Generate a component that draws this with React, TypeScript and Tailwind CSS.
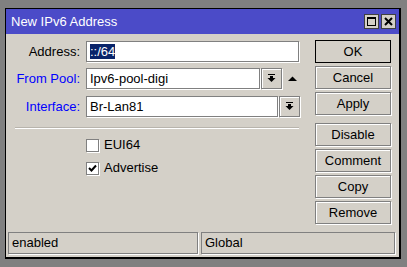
import React from "react";

const font = { fontFamily: '"Liberation Sans", Arial, sans-serif' };

function DropIcon() {
  return (
    <svg width="9" height="9" viewBox="0 0 9 9">
      <rect x="1" y="0" width="7" height="1" fill="#000" />
      <rect x="3" y="2" width="3" height="2" fill="#000" />
      <polygon points="0.5,4 8.5,4 4.5,8" fill="#000" />
    </svg>
  );
}

function Field({ w, children }: { w: string; children?: React.ReactNode }) {
  return (
    <div
      className={`${w} h-[21px] bg-white border border-[#808080] shadow-[1px_1px_0_#fff] flex items-center px-[3px] text-[13px] text-black`}
    >
      {children}
    </div>
  );
}

function DropBtn() {
  return (
    <div className="w-[21px] h-[21px] bg-[#d4d0c8] border border-[#808080] shadow-[inset_1px_1px_0_#fff,1px_1px_0_#fff] flex items-center justify-center">
      <DropIcon />
    </div>
  );
}

function Btn({ label, def }: { label: string; def?: boolean }) {
  return (
    <div
      className={`w-[76px] h-[23px] flex items-center justify-center text-[13px] text-black bg-[#d4d0c8] border ${
        def ? "border-black" : "border-[#808080] shadow-[inset_1px_1px_0_#fff,1px_1px_0_#fff]"
      }`}
    >
      {label}
    </div>
  );
}

function Check({ on, label }: { on?: boolean; label: string }) {
  return (
    <div className="flex items-center gap-[5px] h-[14px] text-[13px] text-black">
      <div className="w-[13px] h-[13px] bg-white border border-[#808080] shadow-[1px_1px_0_#fff] flex items-center justify-center">
        {on && (
          <svg width="9" height="9" viewBox="0 0 9 9">
            <path d="M1 4 L3.5 6.5 L8 1.5" stroke="#000" strokeWidth="2" fill="none" />
          </svg>
        )}
      </div>
      <span>{label}</span>
    </div>
  );
}

export default function App() {
  return (
    <div className="w-[407px] h-[267px] bg-[#808080] pt-[8px] pl-[5px] overflow-hidden" style={font}>
      <div className="w-[396px] h-[251px] border-t border-l border-r-2 border-b-2 border-black flex flex-col bg-[#d4d0c8]">
        {/* title bar */}
        <div className="h-[25px] bg-[#4b4bc8] flex items-center justify-between pl-[5px] pr-[3px]">
          <span className="text-white text-[13px]">New IPv6 Address</span>
          <div className="flex gap-[2px]">
            <div className="w-[15px] h-[15px] bg-[#d4d0c8] border border-[#404040] flex items-center justify-center">
              <div className="w-[9px] h-[9px] border border-black border-t-2" />
            </div>
            <div className="w-[15px] h-[15px] bg-[#d4d0c8] border border-[#404040] flex items-center justify-center">
              <svg width="9" height="9" viewBox="0 0 9 9">
                <path d="M1 1 L8 8 M8 1 L1 8" stroke="#000" strokeWidth="2" />
              </svg>
            </div>
          </div>
        </div>

        {/* body */}
        <div className="flex-1 flex">
          <div className="w-[309px] pt-[7px]">
            <div className="flex items-center">
              <div className="w-[74px] text-right text-[13px] text-black">Address:</div>
              <div className="ml-[6px]">
                <Field w="w-[213px]">
                  <span className="bg-[#0a246a] text-white leading-[15px]">::/64</span>
                </Field>
              </div>
            </div>
            <div className="flex items-center mt-[6px]">
              <div className="w-[74px] text-right text-[13px] text-[#0000ff]">From Pool:</div>
              <div className="ml-[6px] flex gap-[1px]">
                <Field w="w-[174px]">Ipv6-pool-digi</Field>
                <DropBtn />
              </div>
              <svg className="ml-[6px]" width="9" height="6" viewBox="0 0 9 6">
                <polygon points="0,5 9,5 4.5,0.5" fill="#000" />
              </svg>
            </div>
            <div className="flex items-center mt-[7px]">
              <div className="w-[74px] text-right text-[13px] text-[#0000ff]">Interface:</div>
              <div className="ml-[6px] flex gap-[1px]">
                <Field w="w-[192px]">Br-Lan81</Field>
                <DropBtn />
              </div>
            </div>
            <div className="ml-[9px] mt-[10px] w-[284px] border-t border-[#b8b4ac] border-b border-b-white" />
            <div className="ml-[80px] mt-[9px] flex flex-col gap-[9px]">
              <Check label="EUI64" />
              <Check on label="Advertise" />
            </div>
          </div>
          <div className="pt-[6px] flex flex-col">
            <div className="flex flex-col gap-[3px]">
              <Btn label="OK" def />
              <Btn label="Cancel" />
              <Btn label="Apply" />
            </div>
            <div className="flex flex-col gap-[3px] mt-[8px]">
              <Btn label="Disable" />
              <Btn label="Comment" />
              <Btn label="Copy" />
              <Btn label="Remove" />
            </div>
          </div>
        </div>

        {/* status bar */}
        <div className="flex gap-[3px] px-[2px] pb-[3px]">
          <div className="w-[190px] h-[22px] border border-[#808080] shadow-[1px_1px_0_#fff] flex items-center px-[3px] text-[13px] text-black">
            enabled
          </div>
          <div className="w-[194px] h-[22px] border border-[#808080] shadow-[1px_1px_0_#fff] flex items-center px-[3px] text-[13px] text-black">
            Global
          </div>
        </div>
      </div>
    </div>
  );
}
